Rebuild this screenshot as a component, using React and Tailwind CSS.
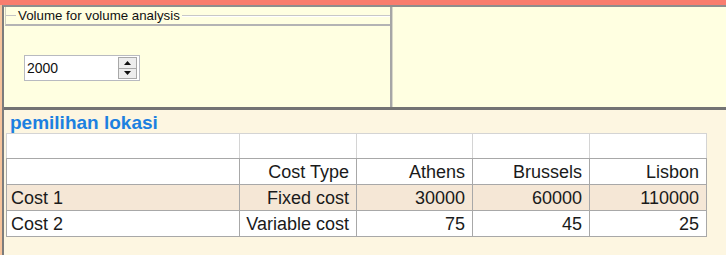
export default function App() {
  const cols = [
    { w: "w-[233px]" },
    { w: "w-[117px]" },
    { w: "w-[116px]" },
    { w: "w-[117px]" },
    { w: "w-[117px]" },
  ];
  const rows = [
    { cells: ["", "", "", "", ""], h: "h-[25px]", bg: "bg-white" },
    { cells: ["", "Cost Type", "Athens", "Brussels", "Lisbon"], h: "h-[26px]", bg: "bg-white" },
    { cells: ["Cost 1", "Fixed cost", "30000", "60000", "110000"], h: "h-[26px]", bg: "bg-[#f5e7d6]" },
    { cells: ["Cost 2", "Variable cost", "75", "45", "25"], h: "h-[26px]", bg: "bg-white" },
  ];
  return (
    <div className="w-[726px] h-[255px] overflow-hidden flex flex-col bg-[#f6c49c] font-['Liberation_Sans',Arial,sans-serif]">
      <div className="h-[5px] bg-[#f97d6e] shrink-0" />
      <div className="flex-1 flex flex-col ml-[2px] border-t-2 border-t-[#8e8e8e] border-l-2 border-l-[#7c7c7c] min-h-0">
        {/* top section */}
        <div className="h-[100px] flex shrink-0">
          <div className="w-[386px] bg-[#ffffe1] flex flex-col">
            <div className="h-[19px] flex items-center border-b-2 border-b-[#b4b4b4] border-l border-l-[#cfcfc0] ml-px">
              <span className="w-[10px] h-px bg-[#c4c4c4]" />
              <span className="text-[13.3px] text-[#111] px-[2px] leading-none">Volume for volume analysis</span>
              <span className="flex-1 h-[2px] border-t border-t-[#c8c8c8] border-b border-b-white" />
            </div>
            <div className="mt-[29px] ml-[20px] w-[116px] h-[26px] border border-[#b8bac0] bg-white flex items-center">
              <span className="flex-1 text-[14px] text-[#111] pl-[2px] leading-none">2000</span>
              <div className="w-[19px] h-[22px] mr-[2px] flex flex-col border border-[#a8a8a8] bg-[#ededed]">
                <div className="flex-1 flex items-center justify-center border-b border-b-[#a8a8a8]">
                  <svg width="7" height="4" viewBox="0 0 7 4"><polygon points="0,4 7,4 3.5,0" fill="#111" /></svg>
                </div>
                <div className="flex-1 flex items-center justify-center">
                  <svg width="7" height="4" viewBox="0 0 7 4"><polygon points="0,0 7,0 3.5,4" fill="#111" /></svg>
                </div>
              </div>
            </div>
          </div>
          <div className="w-[3px] bg-[#a6a6a6] border-r border-r-[#d8d8c8]" />
          <div className="flex-1 bg-[#ffffe1]" />
        </div>
        <div className="h-[3px] bg-[#737373] shrink-0" />
        {/* bottom panel */}
        <div className="flex-1 bg-[#fdf6e1] flex flex-col">
          <div className="h-[23px] pl-[6px] pt-[2px] text-[19px] font-bold text-[#1c80e0] leading-[21px]">pemilihan lokasi</div>
          <table className="ml-[2px] border-collapse table-fixed w-[700px]">
            <tbody>
              {rows.map((r, ri) => (
                <tr key={ri} className={`${r.h} ${r.bg}`}>
                  {r.cells.map((c, ci) => (
                    <td
                      key={ci}
                      className={`${cols[ci].w} border ${ri === 0 ? "border-[#d4d4d4] border-b-[#a8a8a8]" : "border-[#a8a8a8]"} p-0 text-[18px] leading-none text-[#1a1a1a] whitespace-nowrap ${ci === 0 ? "text-left pl-[4px]" : "text-right pr-[7px]"}`}
                    >
                      {c}
                    </td>
                  ))}
                </tr>
              ))}
            </tbody>
          </table>
        </div>
      </div>
    </div>
  );
}
